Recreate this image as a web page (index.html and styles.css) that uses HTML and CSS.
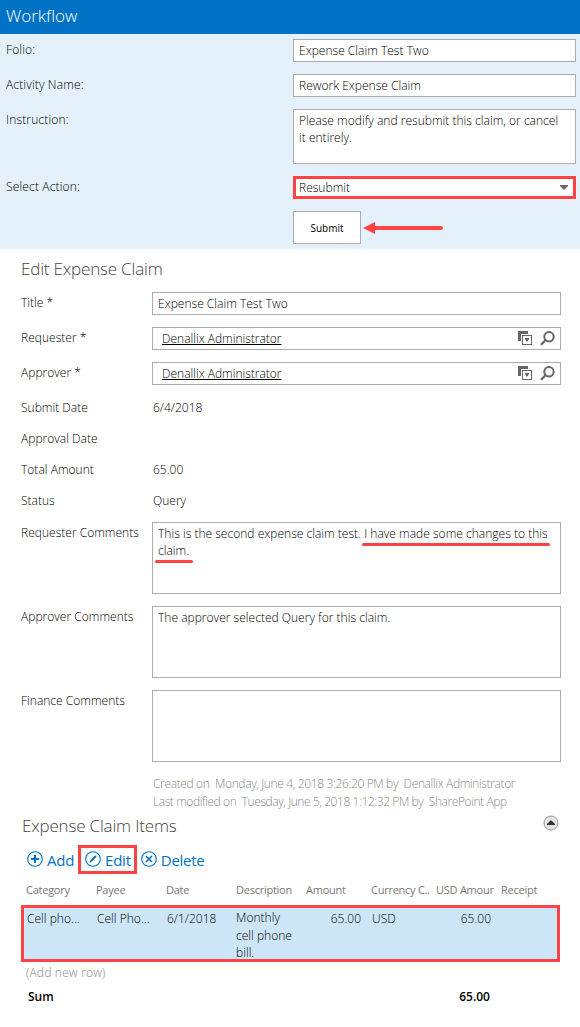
FILE: index.html
```html
<!DOCTYPE html>
<html lang="en">
<head>
  <meta charset="UTF-8" />
  <meta name="viewport" content="width=device-width, initial-scale=1.0" />
  <title>Expense Claim</title>
  <link rel="stylesheet" href="styles.css">
</head>
<body>
  <!-- Workflow panel -->
  <section class="workflow">
    <h1 class="workflow-title">Workflow</h1>
    <div class="workflow-body">
      <div class="workflow-row">
        <div class="label">Folio:</div>
        <div class="field">Expense Claim Test Two</div>
      </div>
      <div class="workflow-row">
        <div class="label">Activity Name:</div>
        <div class="field">Rework Expense Claim</div>
      </div>
      <div class="workflow-row">
        <div class="label">Instruction:</div>
        <div class="field instruction">Please modify and resubmit this claim, or cancel<br>it entirely.</div>
      </div>
      <div class="workflow-row">
        <div class="label">Select Action:</div>
        <div class="field select">
          <span>Resubmit</span>
          <svg width="8" height="5" viewBox="0 0 8 5"><path d="M0 0h8v1L4.5 4.5h-1L0 1z" fill="#666"/></svg>
        </div>
      </div>
      <div class="workflow-row">
        <div></div>
        <div class="submit-wrap">
          <button type="button" class="submit">Submit</button>
          <svg width="80" height="12" viewBox="0 0 80 12">
            <path d="M10 6H78" stroke="#ff4344" stroke-width="4" stroke-linecap="round"/>
            <path d="M0 6L12 0v12z" fill="#ff4344"/>
          </svg>
        </div>
      </div>
    </div>
  </section>

  <!-- Claim form -->
  <section class="claim">
    <h2 class="heading">Edit Expense Claim</h2>
    <div class="form">
      <div class="label">Title *</div>
      <div class="field">Expense Claim Test Two</div>

      <div class="label">Requester *</div>
      <div class="field picker">
        <a class="person">Denallix Administrator</a>
        <svg width="14" height="14" viewBox="0 0 14 14">
          <path d="M0 0h10v3H3v7H0z" fill="#666"/>
          <rect x="4.5" y="4.5" width="9" height="9" fill="#fff" stroke="#666"/>
          <path d="M7 7h4v1l-1.500 2.500h-1L7 8z" fill="#666"/>
        </svg>
        <svg width="15" height="15" viewBox="0 0 15 15" fill="none" stroke="#666">
          <circle cx="9" cy="5.700" r="4.700" stroke-width="2"/>
          <path d="M5.700 9L1 13.700" stroke-width="2.300"/>
        </svg>
      </div>

      <div class="label">Approver *</div>
      <div class="field picker">
        <a class="person">Denallix Administrator</a>
        <svg width="14" height="14" viewBox="0 0 14 14">
          <path d="M0 0h10v3H3v7H0z" fill="#666"/>
          <rect x="4.5" y="4.5" width="9" height="9" fill="#fff" stroke="#666"/>
          <path d="M7 7h4v1l-1.500 2.500h-1L7 8z" fill="#666"/>
        </svg>
        <svg width="15" height="15" viewBox="0 0 15 15" fill="none" stroke="#666">
          <circle cx="9" cy="5.700" r="4.700" stroke-width="2"/>
          <path d="M5.700 9L1 13.700" stroke-width="2.300"/>
        </svg>
      </div>

      <div class="label">Submit Date</div>
      <div class="value">6/4/2018</div>
      <div class="label">Approval Date</div>
      <div class="value"></div>
      <div class="label">Total Amount</div>
      <div class="value">65.00</div>
      <div class="label">Status</div>
      <div class="value last">Query</div>

      <div class="label">Requester Comments</div>
      <div class="field area">This is the second expense claim test. <span class="marked">I have made some changes to this</span><br><span class="marked second">claim.</span></div>
      <div class="label">Approver Comments</div>
      <div class="field area">The approver selected Query for this claim.</div>
      <div class="label">Finance Comments</div>
      <div class="field area"></div>
    </div>
    <div class="audit">
      <p>Created on&nbsp; Monday, June 4, 2018 3:26:20 PM by&nbsp; Denallix Administrator</p>
      <p class="modified">Last modified on&nbsp; Tuesday, June 5, 2018 1:12:32 PM by&nbsp; SharePoint App</p>
    </div>
  </section>

  <!-- Line items -->
  <section class="items">
    <div class="items-head">
      <h2 class="heading">Expense Claim Items</h2>
      <svg width="16" height="16" viewBox="0 0 16 16">
        <circle cx="8" cy="8" r="7" fill="#e4e4e4" stroke="#999"/>
        <path d="M4 10h8v-1L8.500 5.500h-1L4 9z" fill="#333"/>
      </svg>
    </div>
    <div class="toolbar">
      <a class="tool">
        <svg width="16" height="16" viewBox="0 0 16 16" fill="none" stroke="#0072c6">
          <circle cx="8" cy="8" r="7.300" stroke-width="1.100"/>
          <path d="M4 8h8M8 4v8" stroke-width="2"/>
        </svg>
        <span>Add</span>
      </a>
      <a class="tool boxed">
        <svg width="16" height="16" viewBox="0 0 16 16" fill="none" stroke="#0072c6">
          <circle cx="8" cy="8" r="7.300" stroke-width="1.100"/>
          <path d="M6 10L11 5" stroke-width="2"/>
          <path d="M4.700 11.300L6 10" stroke-width="1.200"/>
        </svg>
        <span>Edit</span>
      </a>
      <a class="tool">
        <svg width="16" height="16" viewBox="0 0 16 16" fill="none" stroke="#0072c6">
          <circle cx="8" cy="8" r="7.300" stroke-width="1.100"/>
          <path d="M5 5l6 6M11 5l-6 6" stroke-width="1.600"/>
        </svg>
        <span>Delete</span>
      </a>
    </div>
    <div class="grid-row grid-head">
      <div>Category</div>
      <div>Payee</div>
      <div>Date</div>
      <div>Description</div>
      <div>Amount</div>
      <div>Currency C..</div>
      <div class="cut">USD Amount</div>
      <div>Receipt</div>
    </div>
    <div class="grid-row selected">
      <div>Cell pho...</div>
      <div>Cell Pho...</div>
      <div>6/1/2018</div>
      <div class="desc">Monthly<br>cell phone<br>bill.</div>
      <div class="num">65.00</div>
      <div>USD</div>
      <div class="num">65.00</div>
      <div></div>
    </div>
    <div class="add-row">(Add new row)</div>
    <div class="sum-row">
      <span>Sum</span>
      <span>65.00</span>
    </div>
  </section>
</body>
</html>
```
FILE: styles.css
```css
* {
  box-sizing: border-box;
}
body {
  margin: 0;
  background: #fff;
  font-family: 'Open Sans', 'Noto Sans', sans-serif;
  font-size: 12px;
  font-weight: 300;
  line-height: 17px;
  letter-spacing: 0.02px;
  color: #000;
}
h1, h2, p {
  margin: 0;
  font-weight: 300;
}
svg {
  display: block;
  flex: none;
}

/* Workflow panel */
.workflow {
  height: 249px;
  background: #e4f1fb;
}
.workflow-title {
  height: 34px;
  padding-left: 6px;
  background: #0072c6;
  color: #fff;
  font-size: 17px;
  line-height: 32px;
}
.workflow-body {
  display: flex;
  flex-direction: column;
  gap: 12px;
  padding: 5px 4px 0 6px;
}
.workflow-row {
  display: grid;
  grid-template-columns: 287px 1fr;
}
.label {
  padding-top: 2px;
}
.workflow .label {
  letter-spacing: 0.15px;
}
.field {
  height: 23px;
  padding: 2px 5px;
  background: #fff;
  border: 1px solid #ababab;
}
.instruction {
  height: 55px;
}
.select {
  display: flex;
  justify-content: space-between;
  align-items: center;
  padding: 0 5px 0 3px;
  border: 3px solid #ff4344;
}
.submit-wrap {
  display: flex;
  align-items: center;
  gap: 2px;
}
.submit {
  width: 68px;
  height: 33px;
  padding: 0;
  background: #fff;
  border: 1px solid #ababab;
  font: 400 10px 'Open Sans', 'Noto Sans', sans-serif;
}

/* Claim form */
.claim {
  padding: 8px 19px 0 21px;
}
.heading {
  color: #444;
  font-size: 17px;
  line-height: 24px;
  letter-spacing: -0.18px;
}
.form {
  display: grid;
  grid-template-columns: 131px 1fr;
  row-gap: 12px;
  margin-top: 11px;
}
.picker {
  display: flex;
  align-items: center;
  padding: 0 5px 1px 9px;
}
.picker svg:last-child {
  margin-left: 8px;
}
.person {
  flex: 1;
  padding-top: 1px;
  letter-spacing: 0;
  text-decoration: underline;
}
.value {
  height: 19px;
  padding: 2px 0 0 1px;
}
.value.last {
  height: 20px;
}
.area {
  height: 72px;
}
.marked {
  position: relative;
}
.marked::after {
  content: "";
  position: absolute;
  left: -2px;
  right: -2px;
  bottom: -4px;
  height: 3px;
  border-radius: 2px;
  background: #ff4344;
}
.marked.second::after {
  left: -3px;
  right: -4px;
}
.audit {
  margin-top: 13px;
  padding-left: 132px;
  line-height: 18px;
  letter-spacing: -0.36px;
  color: #888;
}
.modified {
  letter-spacing: -0.42px;
}

/* Line items */
.items {
  padding: 3px 20px 0 21px;
}
.items-head {
  display: flex;
  justify-content: space-between;
  padding: 0 1px;
}
.items-head svg {
  margin-top: 1px;
}
.toolbar {
  display: flex;
  align-items: center;
  height: 29px;
  margin-top: 7px;
  padding-left: 6px;
  font-size: 15px;
  font-weight: 400;
  letter-spacing: -0.25px;
  color: #0072c6;
}
.tool {
  display: flex;
  align-items: center;
  gap: 4px;
}
.tool svg {
  margin-bottom: 2px;
}
.tool span {
  padding-top: 1px;
}
.boxed {
  height: 29px;
  margin: 0 4px;
  padding: 0 3px 0 4px;
  border: 3px solid #ff4344;
}
.grid-row {
  display: grid;
  grid-template-columns: 70px 70px 70px 70px 65px 65px 65px 1fr;
}
.grid-head {
  height: 31px;
  padding: 7px 0 0 5px;
  font-size: 11px;
  font-weight: 400;
  letter-spacing: -0.25px;
  color: #777;
  white-space: nowrap;
}
.cut {
  width: 58px;
  overflow: hidden;
}
.selected {
  height: 57px;
  padding: 0 0 0 3px;
  background: #cde6f7;
  border: 3px solid #ff4344;
}
.selected > div {
  padding-top: 2px;
}
.selected .desc {
  padding-top: 1px;
  margin-left: -1px;
  line-height: 17.5px;
}
.selected .num {
  padding-right: 11px;
  text-align: right;
}
.add-row {
  padding: 2px 5px 0;
  letter-spacing: 0.2px;
  color: #888;
}
.sum-row {
  display: flex;
  justify-content: space-between;
  padding: 7px 70px 0 7px;
  font-weight: 600;
}
```
